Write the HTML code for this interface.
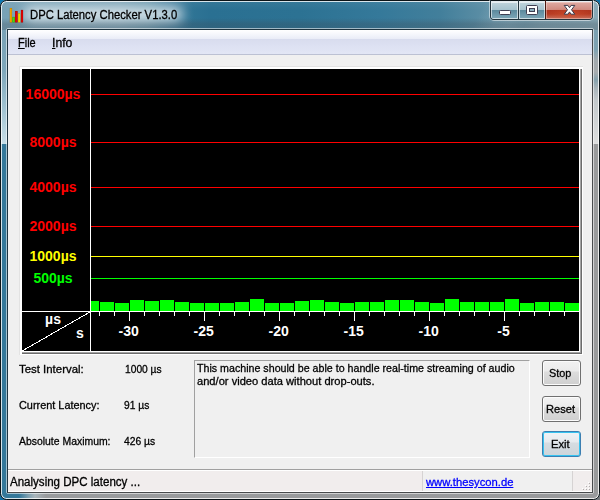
<!DOCTYPE html>
<html><head><meta charset="utf-8"><title>DPC Latency Checker V1.3.0</title>
<style>
html,body{margin:0;padding:0;}
body{width:600px;height:500px;overflow:hidden;position:relative;background:#1b5f8a;font-family:"Liberation Sans",sans-serif;font-size:12px;color:#000;}
i{display:block;position:absolute;font-style:normal}
span,div,a{position:absolute;white-space:nowrap}
.tx{line-height:14px;transform-origin:0 0;-webkit-text-stroke:0.3px currentColor}
#win{left:0;top:0;width:600px;height:500px;border-radius:6.5px;overflow:hidden;background:#34789a}
#tbar{left:0;top:0;width:600px;height:30px;
 background:linear-gradient(115deg,rgba(255,255,255,0) 440px,rgba(255,255,255,.1) 458px,rgba(255,255,255,.1) 472px,rgba(255,255,255,0) 486px),linear-gradient(90deg,#78a2b6 0px,#769fb3 120px,#6595ab 148px,#447f9d 172px,#2f7495 192px,#2a7092 210px,#2c7293 300px,#35799a 380px,#427f9b 440px,#5f90a6 490px,#7fa3b2 540px,#88a9b6 600px);}
#tbar2{left:0;top:0;width:600px;height:30px;background:linear-gradient(180deg,rgba(255,255,255,.06) 0,rgba(255,255,255,0) 10px,rgba(60,70,80,0) 18px,rgba(60,70,80,.28) 24px,rgba(60,70,80,.28) 30px)}
#glow{left:24px;top:7px;width:159px;height:14px;background:rgba(255,255,255,.74);filter:blur(6px);border-radius:7px}
#frameL1{left:0;top:30px;width:8px;height:114px;background:linear-gradient(180deg,#78a2b6 0,#7ea7ba 40px,#9dc0cf 75px,#b9d4df 100px,#c6dde7 114px)}
#frameL2{left:0;top:144px;width:8px;height:356px;background:#34789a}
#frameR1{left:592px;top:30px;width:8px;height:114px;background:linear-gradient(180deg,#7aa0b0 0,#7ea2b1 20px,#a2aaae 30px,#a8acae 42px,#86a2ad 50px,#a8b4ba 58px,#c2c8cb 70px,#dedede 114px)}
#frameR2{left:592px;top:144px;width:8px;height:356px;background:#999a9b}
#frameB{left:0;top:492px;width:600px;height:8px;background:linear-gradient(90deg,#34789a 0,#34789a 19px,#7da0b1 28px,#a9b5bb 35px,#999b9d 46px,#999a9c 600px)}
#outline{left:0;top:0;width:598px;height:498px;border:1px solid #0c1418;border-radius:6.5px;box-shadow:inset 0 0 0 1px rgba(255,255,255,.8)}
#client{left:6px;top:28px;width:586px;height:464px;border:1px solid rgba(255,255,255,.55);border-radius:2px}
#client2{left:7px;top:29px;width:584px;height:462px;border:1px solid #1e3440;border-right-color:#484a4c;border-bottom-color:#484a4c;background:#f0f0f0}
#menu{left:8px;top:30px;width:584px;height:24px;background:linear-gradient(180deg,#fff 0,#f6f7fc 4px,#e9ecf7 9px,#d8dcee 9px,#dde1f2 16px,#e2e6f5 24px);border-bottom:1px solid #bcc1d3}
.tx u{text-decoration:underline}
/* caption buttons */
#cap{left:489px;top:0;width:105px;height:21px;box-sizing:border-box;border:1px solid rgba(255,255,255,.5);border-top:none;border-radius:0 0 5px 5px}
#cap2{left:490px;top:0;width:103px;height:20px;box-sizing:border-box;border:1px solid #24353e;border-top:none;border-radius:0 0 4px 4px;overflow:hidden}
.cb{top:2px;height:17px;box-shadow:inset 0 0 0 1px rgba(255,255,255,.6)}
#bmin{left:0;width:27px;background:linear-gradient(180deg,#c0d4dc 0,#a5c2cd 8px,#5b899c 8px,#6b97a9 12px,#7fa8b8 17px)}
#bmax{left:28px;width:26px;background:linear-gradient(180deg,#c0d4dc 0,#a5c2cd 8px,#5b899c 8px,#6b97a9 12px,#7fa8b8 17px)}
#bclose{left:55px;width:46px;box-shadow:inset 0 0 0 1px rgba(255,235,230,.4);background:radial-gradient(ellipse 22px 7px at 50% 12px,rgba(220,90,50,.45),rgba(200,70,40,0) 100%),linear-gradient(180deg,#dfaba3 0,#d08a7f 8px,#b0351f 8px,#b53a22 12px,#c8725f 17px)}
.sep{top:0;width:1px;height:19px}
/* graph */
#gb1{left:19px;top:66px;width:564px;height:289px;background:#e3e3e3}
#gb2{left:20px;top:67px;width:563px;height:288px;background:#fff}
#gb3{left:22px;top:69px;width:560px;height:285px;background:#6c6c6c}
#gb3b{left:22px;top:69px;width:559px;height:284px;background:#a3a3a3}
#gb4{left:22px;top:69px;width:558px;height:283px;background:#fff}
#graph{left:22px;top:69px;width:557px;height:282px;background:#000}
.b{background:#0f0}
.t{top:312px;width:1px;background:#fff}
.g{left:91px;width:488px;height:1px}
.yl{left:22px;width:62px;text-align:center;font-weight:bold;font-size:14px;line-height:18px}
.xl{top:322.4px;width:40px;text-align:center;font-weight:bold;font-size:14px;line-height:18px;color:#fff}
#ax{left:22px;top:311px;width:557px;height:1px;background:#fff}
#ay{left:90px;top:69px;width:1px;height:282px;background:#fff}
#tb{left:194px;top:360px;width:334px;height:96px;border:1px solid #fff;border-left-color:#a0a0a0;border-top-color:#a0a0a0}
.btn{left:542px;width:37px;height:24px;border:1px solid #707070;border-radius:3px;background:linear-gradient(180deg,#f2f2f2 0,#ebebeb 10px,#dddddd 11px,#cfcfcf 24px);box-shadow:inset 0 0 0 1px #fcfcfc}
#exit{border-color:#3c7fb1;box-shadow:inset 0 0 0 1px #36c3f0;background:linear-gradient(180deg,#f0f3f6 0,#e6eaee 10px,#d6dce1 11px,#cdd5da 24px)}
#status{left:8px;top:469px;width:584px;height:1px;background:#a0a0a0}
#status2{left:8px;top:470px;width:584px;height:1px;background:#fff}
#status3{left:8px;top:471px;width:584px;height:21px;background:#f0f0f0}
#status4{left:8px;top:471px;width:414px;height:21px;background:#f1eded}
#status5{left:573px;top:471px;width:19px;height:21px;background:#f1eded}
.sd{top:471px;width:1px;height:20px;background:#d6d3d3}
.gd{width:1px;height:1px;background:#b0adad;box-shadow:-1px -1px 0 #fff}
</style></head><body>
<i style="left:0;top:0;width:10px;height:10px;background:#0b78b4"></i><i style="left:590px;top:0;width:10px;height:10px;background:#0a70a8"></i><i style="left:0;top:490px;width:10px;height:10px;background:#0c6fa8"></i><i style="left:590px;top:490px;width:10px;height:10px;background:#74777a"></i>
<div id="win">
<i id="tbar"></i><i id="tbar2"></i><i id="glow"></i>
<i id="frameL1"></i><i id="frameL2"></i><i id="frameR1"></i><i id="frameR2"></i><i id="frameB"></i>
</div>
<div id="outline"></div>
<div id="client"></div><div id="client2"></div>
<svg id="icon" style="position:absolute;left:0;top:0" width="30" height="30" viewBox="0 0 30 30">
<rect x="9.75" y="8" width="2.3" height="14.5" fill="#b07200"/><rect x="10.1" y="8.4" width="1.60" height="13.70" fill="#f6a600"/>
<rect x="12.4" y="16.9" width="2.35" height="5.600000000000001" fill="#379400"/><rect x="12.75" y="17.299999999999997" width="1.65" height="4.80" fill="#52dc00"/>
<rect x="15.1" y="11" width="2.5" height="11.5" fill="#980a0a"/><rect x="15.45" y="11.4" width="1.80" height="10.70" fill="#e60202"/>
<rect x="18.0" y="13.25" width="2.25" height="9.25" fill="#b09a00"/><rect x="18.35" y="13.65" width="1.55" height="8.45" fill="#f6e200"/>
<rect x="20.9" y="9.9" width="2.2" height="12.6" fill="#980a0a"/><rect x="21.25" y="10.3" width="1.50" height="11.80" fill="#e60202"/>
</svg>
<div id="cap"></div>
<div id="cap2">
<i class="cb" id="bmin"></i><i class="sep" style="left:27px;background:#24353e"></i>
<i class="cb" id="bmax"></i><i class="sep" style="left:54px;background:#4a1810"></i>
<i class="cb" id="bclose"></i>
</div>
<svg style="position:absolute;left:490px;top:0" width="104" height="22" viewBox="0 0 104 22">
<rect x="9.5" y="10.5" width="11" height="4" rx="1" fill="#fff" stroke="#3f3f52" stroke-width="1"/>
<rect x="36.5" y="5.5" width="11" height="9" rx="1" fill="#fff" stroke="#3f3f52" stroke-width="1"/>
<rect x="39.5" y="8.5" width="5" height="3" fill="#8fb2c0" stroke="#3f3f52" stroke-width="1"/>
<path d="M74.2 5.4 L77.9 5.4 L79.5 7.7 L81.1 5.4 L84.8 5.4 L81.5 9.8 L84.8 14.2 L81.1 14.2 L79.5 11.9 L77.9 14.2 L74.2 14.2 L77.5 9.8 Z" fill="#fff" stroke="#3a3a4a" stroke-width="1" stroke-linejoin="round"/>
</svg>
<div id="menu"></div>
<i id="gb1"></i><i id="gb2"></i><i id="gb3"></i><i id="gb3b"></i><i id="gb4"></i><i id="graph"></i>
<i class="g" style="top:94px;background:#f00"></i><span class="yl" style="top:85.4px;color:#f00">16000µs</span><i class="g" style="top:142px;background:#f00"></i><span class="yl" style="top:133.4px;color:#f00">8000µs</span><i class="g" style="top:187px;background:#f00"></i><span class="yl" style="top:178.4px;color:#f00">4000µs</span><i class="g" style="top:226px;background:#f00"></i><span class="yl" style="top:217.4px;color:#f00">2000µs</span><i class="g" style="top:256px;background:#ff0"></i><span class="yl" style="top:247.4px;color:#ff0">1000µs</span><i class="g" style="top:278px;background:#0f0"></i><span class="yl" style="top:269.4px;color:#0f0">500µs</span>
<i class="b" style="left:91px;width:8px;top:301px;height:10px"></i><i class="b" style="left:100px;width:14px;top:302px;height:9px"></i><i class="b" style="left:115px;width:14px;top:303px;height:8px"></i><i class="b" style="left:130px;width:14px;top:300px;height:11px"></i><i class="b" style="left:145px;width:14px;top:301px;height:10px"></i><i class="b" style="left:160px;width:14px;top:300px;height:11px"></i><i class="b" style="left:175px;width:14px;top:302px;height:9px"></i><i class="b" style="left:190px;width:14px;top:303px;height:8px"></i><i class="b" style="left:205px;width:14px;top:303px;height:8px"></i><i class="b" style="left:220px;width:14px;top:303px;height:8px"></i><i class="b" style="left:235px;width:14px;top:302px;height:9px"></i><i class="b" style="left:250px;width:14px;top:299px;height:12px"></i><i class="b" style="left:265px;width:14px;top:303px;height:8px"></i><i class="b" style="left:280px;width:14px;top:303px;height:8px"></i><i class="b" style="left:295px;width:14px;top:301px;height:10px"></i><i class="b" style="left:310px;width:14px;top:300px;height:11px"></i><i class="b" style="left:325px;width:14px;top:302px;height:9px"></i><i class="b" style="left:340px;width:14px;top:303px;height:8px"></i><i class="b" style="left:355px;width:14px;top:302px;height:9px"></i><i class="b" style="left:370px;width:14px;top:302px;height:9px"></i><i class="b" style="left:385px;width:14px;top:300px;height:11px"></i><i class="b" style="left:400px;width:14px;top:300px;height:11px"></i><i class="b" style="left:415px;width:14px;top:302px;height:9px"></i><i class="b" style="left:430px;width:14px;top:303px;height:8px"></i><i class="b" style="left:445px;width:14px;top:299px;height:12px"></i><i class="b" style="left:460px;width:14px;top:302px;height:9px"></i><i class="b" style="left:475px;width:14px;top:302px;height:9px"></i><i class="b" style="left:490px;width:14px;top:302px;height:9px"></i><i class="b" style="left:505px;width:14px;top:299px;height:12px"></i><i class="b" style="left:520px;width:14px;top:303px;height:8px"></i><i class="b" style="left:535px;width:14px;top:302px;height:9px"></i><i class="b" style="left:550px;width:14px;top:302px;height:9px"></i><i class="b" style="left:565px;width:14px;top:303px;height:8px"></i>
<i id="ax"></i><i id="ay"></i>
<i class="t" style="left:99px;height:4px"></i><i class="t" style="left:114px;height:4px"></i><i class="t" style="left:129px;height:9px"></i><i class="t" style="left:144px;height:4px"></i><i class="t" style="left:159px;height:4px"></i><i class="t" style="left:174px;height:4px"></i><i class="t" style="left:189px;height:4px"></i><i class="t" style="left:204px;height:9px"></i><i class="t" style="left:219px;height:4px"></i><i class="t" style="left:234px;height:4px"></i><i class="t" style="left:249px;height:4px"></i><i class="t" style="left:264px;height:4px"></i><i class="t" style="left:279px;height:9px"></i><i class="t" style="left:294px;height:4px"></i><i class="t" style="left:309px;height:4px"></i><i class="t" style="left:324px;height:4px"></i><i class="t" style="left:339px;height:4px"></i><i class="t" style="left:354px;height:9px"></i><i class="t" style="left:369px;height:4px"></i><i class="t" style="left:384px;height:4px"></i><i class="t" style="left:399px;height:4px"></i><i class="t" style="left:414px;height:4px"></i><i class="t" style="left:429px;height:9px"></i><i class="t" style="left:444px;height:4px"></i><i class="t" style="left:459px;height:4px"></i><i class="t" style="left:474px;height:4px"></i><i class="t" style="left:489px;height:4px"></i><i class="t" style="left:504px;height:9px"></i><i class="t" style="left:519px;height:4px"></i><i class="t" style="left:534px;height:4px"></i><i class="t" style="left:549px;height:4px"></i><i class="t" style="left:564px;height:4px"></i>
<span class="xl" style="left:108.6px">-30</span><span class="xl" style="left:183.6px">-25</span><span class="xl" style="left:258.6px">-20</span><span class="xl" style="left:333.6px">-15</span><span class="xl" style="left:408.6px">-10</span><span class="xl" style="left:483.6px">-5</span>
<svg style="position:absolute;left:22px;top:312px" width="68" height="39"><line x1="68" y1="0" x2="0" y2="39" stroke="#fff" stroke-width="1" shape-rendering="crispEdges"/></svg>
<span class="xl" style="left:33px;top:310.4px;">µs</span>
<span class="xl" style="left:60px;top:324.3px;">s</span>
<div id="tb"></div>
<div class="btn" style="top:360px"></div>
<div class="btn" style="top:396px"></div>
<div class="btn" id="exit" style="top:431px"></div>
<i id="status"></i><i id="status2"></i><i id="status3"></i><i id="status4"></i><i id="status5"></i>
<i style="left:8px;top:491px;width:584px;height:1px;background:#fff"></i><i class="sd" style="left:422px"></i><i class="sd" style="left:572px"></i>
<i class="gd" style="left:589px;top:483px"></i><i class="gd" style="left:586px;top:486px"></i><i class="gd" style="left:589px;top:486px"></i><i class="gd" style="left:583px;top:489px"></i><i class="gd" style="left:586px;top:489px"></i><i class="gd" style="left:589px;top:489px"></i>
<span id="title" class="tx" style="left:30px;top:7.64px;font-size:12px;font-weight:400;color:#000;transform:scaleX(0.9391);">DPC Latency Checker V1.3.0</span>
<span id="mfile" class="tx" style="left:18.3px;top:35.54px;font-size:12px;font-weight:400;color:#000;transform:scaleX(0.9150);"><u>F</u>ile</span>
<span id="minfo" class="tx" style="left:52px;top:35.54px;font-size:12px;font-weight:400;color:#000;transform:scaleX(1.0192);"><u>I</u>nfo</span>
<span id="l1" class="tx" style="left:19px;top:362.31px;font-size:11.5px;font-weight:400;color:#000;transform:scaleX(0.9923);">Test Interval:</span>
<span id="v1" class="tx" style="left:125px;top:362.31px;font-size:11.5px;font-weight:400;color:#000;transform:scaleX(0.8893);">1000 µs</span>
<span id="l2" class="tx" style="left:19px;top:398.31px;font-size:11.5px;font-weight:400;color:#000;transform:scaleX(0.9469);">Current Latency:</span>
<span id="v2" class="tx" style="left:123.8px;top:398.31px;font-size:11.5px;font-weight:400;color:#000;transform:scaleX(0.8916);">91 µs</span>
<span id="l3" class="tx" style="left:19px;top:434.31px;font-size:11.5px;font-weight:400;color:#000;transform:scaleX(0.9061);">Absolute Maximum:</span>
<span id="v3" class="tx" style="left:123.8px;top:434.31px;font-size:11.5px;font-weight:400;color:#000;transform:scaleX(0.8974);">426 µs</span>
<span id="tb1" class="tx" style="left:197.3px;top:361.31px;font-size:11.5px;font-weight:400;color:#000;transform:scaleX(0.9272);">This machine should be able to handle real-time streaming of audio</span>
<span id="tb2" class="tx" style="left:197.3px;top:374.31px;font-size:11.5px;font-weight:400;color:#000;transform:scaleX(0.9674);">and/or video data without drop-outs.</span>
<span id="bstop" class="tx" style="left:549.3px;top:366.31px;font-size:11.5px;font-weight:400;color:#000;transform:scaleX(0.9463);">Stop</span>
<span id="breset" class="tx" style="left:546.1px;top:402.31px;font-size:11.5px;font-weight:400;color:#000;transform:scaleX(0.9652);">Reset</span>
<span id="bexit" class="tx" style="left:551.3px;top:437.31px;font-size:11.5px;font-weight:400;color:#000;transform:scaleX(0.9754);">Exit</span>
<span id="stat" class="tx" style="left:9.8px;top:474.74px;font-size:12px;font-weight:400;color:#000;transform:scaleX(0.9616);">Analysing DPC latency ...</span>
<span id="link" class="tx" style="left:426px;top:475.0px;font-size:11.5px;font-weight:400;color:#0000ff;transform:scaleX(0.9765);text-decoration:underline;">www.thesycon.de</span>

</body></html>
